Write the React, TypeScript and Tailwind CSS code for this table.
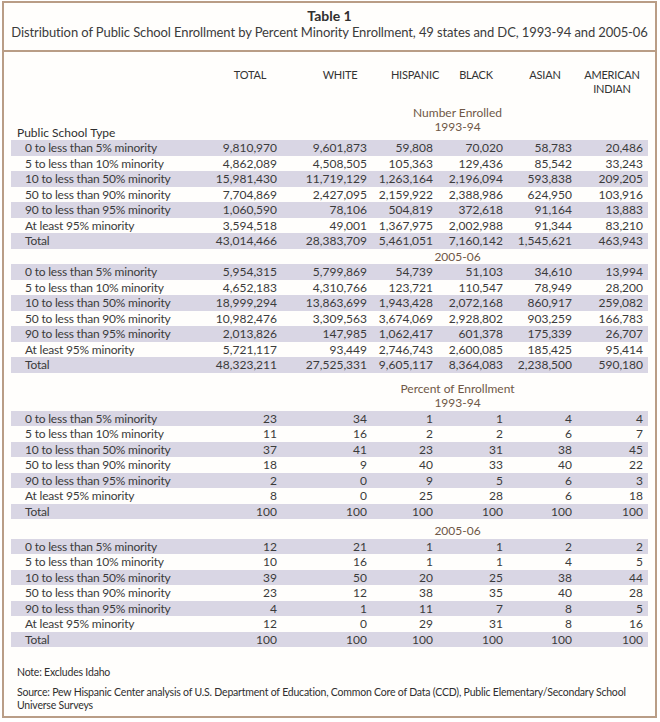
const labels = [
  "0 to less than 5% minority",
  "5 to less than 10% minority",
  "10 to less than 50% minority",
  "50 to less than 90% minority",
  "90 to less than 95% minority",
  "At least 95% minority",
  "Total",
];

const enrolled9394 = [
  ["9,810,970", "9,601,873", "59,808", "70,020", "58,783", "20,486"],
  ["4,862,089", "4,508,505", "105,363", "129,436", "85,542", "33,243"],
  ["15,981,430", "11,719,129", "1,263,164", "2,196,094", "593,838", "209,205"],
  ["7,704,869", "2,427,095", "2,159,922", "2,388,986", "624,950", "103,916"],
  ["1,060,590", "78,106", "504,819", "372,618", "91,164", "13,883"],
  ["3,594,518", "49,001", "1,367,975", "2,002,988", "91,344", "83,210"],
  ["43,014,466", "28,383,709", "5,461,051", "7,160,142", "1,545,621", "463,943"],
];

const enrolled0506 = [
  ["5,954,315", "5,799,869", "54,739", "51,103", "34,610", "13,994"],
  ["4,652,183", "4,310,766", "123,721", "110,547", "78,949", "28,200"],
  ["18,999,294", "13,863,699", "1,943,428", "2,072,168", "860,917", "259,082"],
  ["10,982,476", "3,309,563", "3,674,069", "2,928,802", "903,259", "166,783"],
  ["2,013,826", "147,985", "1,062,417", "601,378", "175,339", "26,707"],
  ["5,721,117", "93,449", "2,746,743", "2,600,085", "185,425", "95,414"],
  ["48,323,211", "27,525,331", "9,605,117", "8,364,083", "2,238,500", "590,180"],
];

const pct9394 = [
  ["23", "34", "1", "1", "4", "4"],
  ["11", "16", "2", "2", "6", "7"],
  ["37", "41", "23", "31", "38", "45"],
  ["18", "9", "40", "33", "40", "22"],
  ["2", "0", "9", "5", "6", "3"],
  ["8", "0", "25", "28", "6", "18"],
  ["100", "100", "100", "100", "100", "100"],
];

const pct0506 = [
  ["12", "21", "1", "1", "2", "2"],
  ["10", "16", "1", "1", "4", "5"],
  ["39", "50", "20", "25", "38", "44"],
  ["23", "12", "38", "35", "40", "28"],
  ["4", "1", "11", "7", "8", "5"],
  ["12", "0", "29", "31", "8", "16"],
  ["100", "100", "100", "100", "100", "100"],
];

const cols = "grid grid-cols-[176px_95px_90px_66px_70px_69px_1fr]";

function Block({ rows }: { rows: string[][] }) {
  return (
    <div>
      {rows.map((r, i) => (
        <div
          key={i}
          className={`${cols} h-[15.5px] items-center text-[12px] leading-[15.5px] ${
            i % 2 === 0 ? "bg-[#d9d6e4]" : ""
          }`}
        >
          <div className="pl-[14px] whitespace-nowrap tracking-[-0.2px]">{labels[i]}</div>
          {r.map((v, j) => (
            <div key={j} className="pr-[5px] text-right">
              {v}
            </div>
          ))}
        </div>
      ))}
    </div>
  );
}

function SectionLabel({ lines, className }: { lines: string[]; className?: string }) {
  return (
    <div className={`text-center text-[12px] leading-[14px] text-[#6f5847] ${className ?? ""}`}>
      {lines.map((l) => (
        <div key={l}>{l}</div>
      ))}
    </div>
  );
}

const heads = [
  { t: "TOTAL", m: "mr-0" },
  { t: "WHITE", m: "mr-0" },
  { t: "HISPANIC", m: "-mr-[9px]" },
  { t: "BLACK", m: "mr-0" },
  { t: "ASIAN", m: "mr-0" },
];

export default function App() {
  return (
    <div className="w-[660px] h-[722px] bg-white text-[#3b3b3b] font-['Lato','Liberation_Sans',sans-serif]">
      <div className="ml-[2px] mt-[1px] w-[655px] h-[717px] border-2 border-[#b99d86] bg-[#fffefc] flex flex-col">
        {/* Title */}
        <div className="pt-[5px] pb-[10px] text-center border-b-2 border-[#b99d86]">
          <div className="text-[14px] leading-[16px] font-bold text-[#2f2f2f]">Table 1</div>
          <div className="text-[13px] leading-[16px] tracking-[-0.1px]">
            Distribution of Public School Enrollment by Percent Minority Enrollment, 49 states and DC, 1993-94 and 2005-06
          </div>
        </div>

        <div className="px-[7px]">
          {/* Column headings */}
          <div className={`${cols} pt-[16px] text-[11px] leading-[14px] tracking-[-0.2px] text-[#333]`}>
            <div />
            {heads.map((h) => (
              <div key={h.t} className="flex justify-end">
                <div className={`w-[64px] text-center ${h.m}`}>{h.t}</div>
              </div>
            ))}
            <div className="flex justify-end">
              <div className="w-[64px] mr-[4px] text-center">
                AMERICAN
                <br />
                INDIAN
              </div>
            </div>
          </div>

          <div className="flex items-end pt-[10px]">
            <div className="w-[180px] pl-[6px] text-[12px] leading-[14px] text-[#2f2f2f]">Public School Type</div>
            <SectionLabel lines={["Number Enrolled", "1993-94"]} className="flex-1 pl-[76px] mb-[6px]" />
          </div>

          <Block rows={enrolled9394} />
          <SectionLabel lines={["2005-06"]} className="pl-[256px] leading-[15.5px]" />
          <Block rows={enrolled0506} />

          <SectionLabel lines={["Percent of Enrollment", "1993-94"]} className="pl-[256px] pt-[9px] pb-[1px]" />
          <Block rows={pct9394} />
          <SectionLabel lines={["2005-06"]} className="pl-[256px] pt-[4px] leading-[15.5px]" />
          <Block rows={pct0506} />

          {/* Notes */}
          <div className="pl-[6px] text-[10.5px] leading-[13px] tracking-[-0.2px] text-[#2f2f2f]">
            <div className="mt-[19px]">Note: Excludes Idaho</div>
            <div className="mt-[7px]">
              <span className="whitespace-nowrap">
                Source: Pew Hispanic Center analysis of U.S. Department of Education, Common Core of Data (CCD), Public
                Elementary/Secondary School
              </span>
              <br />
              Universe Surveys
            </div>
          </div>
        </div>
      </div>
    </div>
  );
}
